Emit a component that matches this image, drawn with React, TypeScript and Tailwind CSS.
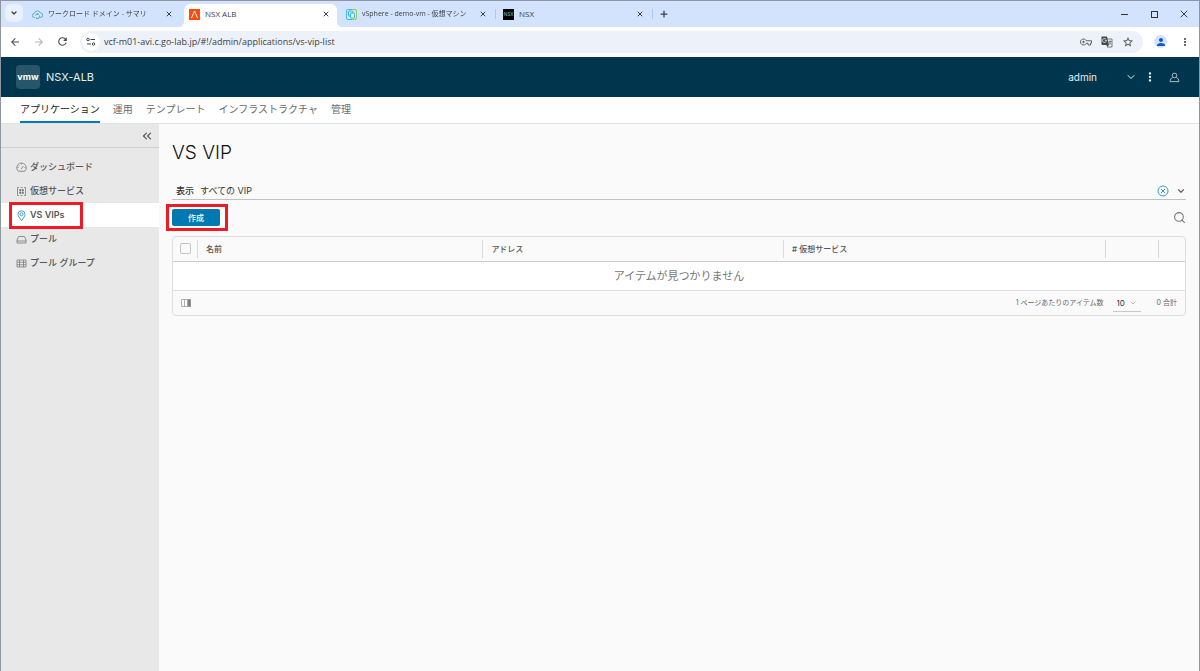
import type { ReactNode } from "react";
import { ChevronDown, ChevronsLeft, Plus, Search, X } from "lucide-react";
import { MdArrowBack, MdArrowForward, MdMoreVert, MdPerson, MdRefresh, MdStarOutline } from "react-icons/md";

interface BrowserTab {
  title: string
  icon: ReactNode
  active?: boolean
  long?: boolean
}

interface SideItem {
  label: string
  icon: ReactNode
  active?: boolean
}

function CloudIcon() {
  return (
    <svg viewBox="0 0 22 22" className="size-[11px] shrink-0" fill="none" stroke="#5aa9dd" strokeWidth="2">
      <path d="M6 17H5a4 4 0 0 1-.6-8A6.600 6.600 0 0 1 17 8a4.500 4.500 0 0 1 0 9h-1" />
      <path d="M7 13a4 4 0 0 1 7-2M15 13a4 4 0 0 1-7 4" stroke="#3dbfa6" />
      <path d="M8 19h6M11 9v3" />
    </svg>
  )
}

function AviIcon() {
  return (
    <svg viewBox="0 0 22 22" className="size-[11px] shrink-0">
      <rect width="22" height="22" fill="#ff4b0f" />
      <path d="M5 18 11 4l6 14" fill="none" stroke="#fff" strokeWidth="2" />
    </svg>
  )
}

function VsphereIcon() {
  return (
    <svg viewBox="0 0 22 22" className="size-[11px] shrink-0" fill="none" strokeWidth="2">
      <rect x="1" y="1" width="20" height="20" rx="3" fill="#c9edf8" stroke="#46b4e8" />
      <path d="M12 1h6a3 3 0 0 1 3 3v14a3 3 0 0 1-3 3h-6" stroke="#9ccb5a" />
      <rect x="5" y="4" width="9" height="10" rx="1" stroke="#36aee6" />
      <rect x="9" y="8" width="8" height="10" rx="1" fill="#e6f7fc" stroke="#36aee6" />
    </svg>
  )
}

function NsxIcon() {
  return (
    <span className="flex size-[11px] shrink-0 items-center justify-center bg-black text-[5px] leading-none font-bold text-[#5b8c7c]">
      NSX
    </span>
  )
}

function KeyIcon() {
  return (
    <svg viewBox="0 0 24 24" className="size-3" fill="none" stroke="#5f6368" strokeWidth="2">
      <path d="M12.500 9.500A6 6 0 1 0 12.500 14.500H16V18h5v-3.500h2v-5z" />
      <circle cx="7" cy="12" r="1.500" fill="#474a4d" />
    </svg>
  )
}

function TranslateIcon() {
  return (
    <svg viewBox="0 0 24 24" className="size-3" fill="none">
      <path d="M10 6h12v16H12" stroke="#5f6368" strokeWidth="1.600" />
      <path d="M1 1h11l4 17H3a2 2 0 0 1-2-2z" fill="#474a4d" />
      <path d="M11 8.500H7.500M10.800 8.500A4 4 0 1 1 9.500 6" stroke="#fff" strokeWidth="1.500" />
      <path d="M15 11h6M18 9v2M20 11c-.5 3-2 5-4 6M16 12c1 2 2.500 4 4.500 5" stroke="#5f6368" strokeWidth="1.400" />
      <path d="m11 18 1 4 4-4z" fill="#474a4d" />
    </svg>
  )
}

function SiteInfoIcon() {
  return (
    <svg viewBox="0 0 20 20" className="size-[10px]" fill="none" stroke="#3c4043" strokeWidth="2">
      <circle cx="4" cy="5" r="2.500" />
      <path d="M9 5h9M2 14h8" />
      <circle cx="15" cy="14" r="2.500" />
    </svg>
  )
}

function UserIcon() {
  return (
    <svg viewBox="0 0 24 24" className="size-[11px] text-[#b8c8cf]" fill="none" stroke="currentColor" strokeWidth="2">
      <circle cx="12" cy="7.500" r="5" />
      <path d="M8 12c-3.500 1.500-5.500 4-5.500 9h19c0-5-2-7.500-5.500-9" />
    </svg>
  )
}

function GaugeIcon() {
  return (
    <svg viewBox="0 0 22 22" className="size-[11px] text-[#777]" fill="none" stroke="currentColor" strokeWidth="1.600">
      <path d="M4.500 18.500a9.500 9.500 0 1 1 13 0z" />
      <path d="m10 14 5-6M11 3v2M3 11h2M17 11h2M5.500 6l1 1" />
    </svg>
  )
}

function ServiceIcon() {
  return (
    <svg viewBox="0 0 22 22" className="size-[11px] text-[#777]" fill="none" stroke="currentColor" strokeWidth="1.500">
      <path d="M6 3H3v16h3M16 3h3v16h-3M9 3h4M9 19h4" />
      <path d="M7 7h3v3H7zM12 7h3v3h-3zM7 12h3v3H7zM12 12h3v3h-3z" fill="currentColor" strokeWidth="1" />
    </svg>
  )
}

function PinIcon() {
  return (
    <svg viewBox="0 0 22 22" className="size-[11px] text-[#2f93c4]" fill="none" stroke="currentColor" strokeWidth="1.800">
      <path d="M11 21C7 16 4 12 4 8.500a7 7 0 0 1 14 0C18 12 15 16 11 21z" />
      <circle cx="11" cy="8.500" r="3" />
    </svg>
  )
}

function PoolIcon() {
  return (
    <svg viewBox="0 0 22 22" className="size-[11px] text-[#777]" fill="none" stroke="currentColor" strokeWidth="1.600">
      <path d="M2 18v-6l3-7h12l3 7v6zM2 14h18" />
    </svg>
  )
}

function PoolGroupIcon() {
  return (
    <svg viewBox="0 0 22 22" className="size-[11px] text-[#777]" fill="none" stroke="currentColor" strokeWidth="1.500">
      <path d="M2 4h18v14H2zM2 8.500h18M2 13.500h18M7 4v14M15 4v14" />
    </svg>
  )
}

const tabs: BrowserTab[] = [
  { title: "ワークロード ドメイン - サマリ", icon: <CloudIcon />, long: true },
  { title: "NSX ALB", icon: <AviIcon />, active: true },
  { title: "vSphere - demo-vm - 仮想マシン", icon: <VsphereIcon />, long: true },
  { title: "NSX", icon: <NsxIcon /> },
];

const sections = ["アプリケーション", "運用", "テンプレート", "インフラストラクチャ", "管理"];

const sideItems: SideItem[] = [
  { label: "ダッシュボード", icon: <GaugeIcon /> },
  { label: "仮想サービス", icon: <ServiceIcon /> },
  { label: "VS VIPs", icon: <PinIcon />, active: true },
  { label: "プール", icon: <PoolIcon /> },
  { label: "プール グループ", icon: <PoolGroupIcon /> },
];

function TabStrip() {
  return (
    <div className="flex h-[26px] bg-[#d3e3fd] pl-1 text-[#3c4043]">
      <button aria-label="タブを検索" className="mt-[3px] mr-1 flex size-[18px] items-center justify-center rounded-md bg-[#e9f1fe]">
        <ChevronDown className="size-2" strokeWidth={4} />
      </button>
      <div role="tablist" className="flex">
        {tabs.map((tab) => (
          <div
            key={tab.title}
            className={tab.active ? "relative mt-[3px] mr-1 flex w-[153px] items-center rounded-t-md bg-white pb-[3px] pl-[5px]" : "flex w-[157px] items-center pl-[5px]"}
          >
            {tab.active && (
              <svg viewBox="0 0 165 6" className="absolute bottom-0 -left-[6px] h-[6px] w-[165px]" fill="#fff">
                <path d="M0 6h6V0c0 4-2 6-6 6zM165 6h-6V0c0 4 2 6 6 6z" />
              </svg>
            )}
            {tab.icon}
            <button
              role="tab"
              aria-selected={!!tab.active}
              className={tab.long ? "ml-[5px] w-28 mask-r-from-90% text-left text-[7px] leading-3 whitespace-nowrap" : "ml-[5px] w-28 text-left text-[8px] leading-3 whitespace-nowrap"}
            >
              {tab.title}
            </button>
            <button aria-label="タブを閉じる" className="ml-[5px]">
              <X className="size-2" strokeWidth={3} />
            </button>
            {!tab.active && tab.title !== tabs[0].title && <span className="ml-2 h-[10px] w-px bg-[#a8c7fa]" />}
          </div>
        ))}
      </div>
      <button aria-label="新しいタブ" className="ml-1">
        <Plus className="size-[10px]" strokeWidth={3} />
      </button>
      <div className="ml-auto flex items-center gap-[18px] pr-[9px]">
        <button aria-label="最小化" className="flex size-3 items-center justify-center">
          <span className="h-px w-[7px] bg-[#333]" />
        </button>
        <button aria-label="最大化" className="flex size-3 items-center justify-center">
          <span className="size-[7px] border border-[#333]" />
        </button>
        <button aria-label="閉じる">
          <X className="size-3" strokeWidth={2} />
        </button>
      </div>
    </div>
  )
}

function AddressBar() {
  return (
    <div className="flex h-[30px] items-center bg-white pr-2 pb-px pl-2 text-[#474a4d]">
      <button aria-label="戻る"><MdArrowBack className="size-3" /></button>
      <button aria-label="進む" className="ml-3 text-[#b0b3b7]"><MdArrowForward className="size-3" /></button>
      <button aria-label="再読み込み" className="ml-[11px]"><MdRefresh className="size-[13px]" /></button>
      <div className="ml-[11px] flex h-[22px] min-w-0 grow items-center rounded-full bg-[#edf1fa] pr-[9px] pl-[2px]">
        <button aria-label="サイト情報" className="flex size-[18px] items-center justify-center rounded-full bg-white">
          <SiteInfoIcon />
        </button>
        <input
          aria-label="アドレス"
          className="ml-1 min-w-0 grow bg-transparent text-[9px] leading-4 text-[#3c4043] outline-none"
          defaultValue="vcf-m01-avi.c.go-lab.jp/#!/admin/applications/vs-vip-list"
        />
        <div className="flex items-center gap-[9px]">
          <button aria-label="パスワード"><KeyIcon /></button>
          <button aria-label="翻訳"><TranslateIcon /></button>
          <button aria-label="ブックマーク"><MdStarOutline className="size-3" /></button>
        </div>
      </div>
      <button aria-label="プロフィール" className="ml-[11px] flex size-[13px] items-center justify-center rounded-full bg-[#d3e3fd] text-[#0b57d0]">
        <MdPerson className="size-3" />
      </button>
      <button aria-label="メニュー" className="ml-3"><MdMoreVert className="size-3" /></button>
    </div>
  )
}

function AppHeader() {
  return (
    <header className="flex h-10 items-center bg-[#00364d] pr-[19px] pl-[15px] font-['Inter','Noto_Sans_CJK_JP',sans-serif] text-[#e8eef1]">
      <span className="flex size-6 items-center justify-center rounded-sm bg-[#27566b] text-[9px] font-bold text-white">vmw</span>
      <span className="ml-[6px] text-[11px]">NSX-ALB</span>
      <button className="ml-auto flex items-center gap-7 text-[10px]">
        admin
        <ChevronDown className="size-3" />
      </button>
      <button aria-label="その他" className="ml-[6px]"><MdMoreVert className="size-[14px]" /></button>
      <button aria-label="ユーザー" className="ml-3"><UserIcon /></button>
    </header>
  )
}

function SectionNav() {
  return (
    <nav className="flex h-[27px] gap-[13px] border-b border-[#dde5e7] bg-white pl-[19px] text-[10px] text-[#6a6a6a]">
      {sections.map((name, i) => (
        <a key={name} href="#" className={i === 0 ? "border-b-2 border-[#0079b8] leading-6 text-[#222]" : "leading-6"}>
          {name}
        </a>
      ))}
    </nav>
  )
}

function Sidebar() {
  return (
    <aside className="w-[158px] shrink-0 bg-[#e8e8e8] text-[#565656]">
      <div className="flex h-6 items-center justify-end border-b border-[#d0d0d0] pr-[5px]">
        <button aria-label="折りたたむ"><ChevronsLeft className="size-[14px]" /></button>
      </div>
      <ul className="mt-[7px]">
        {sideItems.map((item) => (
          <li key={item.label} className={item.active ? "relative bg-white font-semibold" : "font-medium"}>
            <a href="#" className="flex h-6 items-center gap-[3px] pl-[15px] text-[9px]">
              {item.icon}
              {item.label}
            </a>
            {item.active && <span className="pointer-events-none absolute -top-px left-2 h-[27px] w-[74px] border-3 border-[#ed1c24]" />}
          </li>
        ))}
      </ul>
    </aside>
  )
}

function Heading({ label }: { label: string }) {
  return <span className="block h-[18px] border-l border-[#dadada] pl-2 leading-[18px]">{label}</span>
}

function VipTable() {
  return (
    <div className="mt-[10px] rounded-sm border border-[#dedede] bg-[#fafafa] text-[#565656]">
      <table className="w-full table-fixed border-collapse text-left text-[8px]">
        <thead>
          <tr className="h-6 border-b border-[#ccc]">
            <th className="w-6 p-0">
              <input type="checkbox" aria-label="すべて選択" className="ml-[7px] block size-[11px] appearance-none rounded-xs border border-[#c4c4c4] bg-[#fafafa]" />
            </th>
            <th className="w-[28.2%] p-0 font-medium"><Heading label="名前" /></th>
            <th className="w-[29.7%] p-0 font-medium"><Heading label="アドレス" /></th>
            <th className="p-0 font-medium"><Heading label="# 仮想サービス" /></th>
            <th className="w-[53px] p-0"><Heading label="" /></th>
            <th className="w-[27px] p-0"><Heading label="" /></th>
          </tr>
        </thead>
        <tbody>
          <tr className="h-[29px] border-b border-[#dedede] bg-white">
            <td colSpan={6} className="p-0 text-center text-[11px] leading-4 text-[#777]">アイテムが見つかりません</td>
          </tr>
        </tbody>
      </table>
      <div className="flex h-6 items-center pr-2 pl-2 text-[7px] text-[#666]">
        <button aria-label="列の管理">
          <svg viewBox="0 0 20 16" className="h-2 w-[10px]" fill="none" stroke="#999" strokeWidth="1.500">
            <path d="M1 1h18v14H1zM7 1v14M13 1v14" />
            <path d="M14 1h5v14h-5z" fill="#777" />
          </svg>
        </button>
        <label htmlFor="page-size" className="mt-px ml-auto">1 ページあたりのアイテム数</label>
        <div className="ml-[9px] flex w-7 items-center border-b border-[#c8c8c8] pt-[2px] pr-1">
          <select id="page-size" className="w-5 appearance-none bg-transparent pl-1 text-[8px] leading-4 text-[#333] outline-none">
            <option>10</option>
          </select>
          <ChevronDown className="size-2 shrink-0 text-[#999]" />
        </div>
        <span className="mt-px ml-4">0 合計</span>
      </div>
    </div>
  )
}

function App() {
  return (
    <div className="flex min-h-screen flex-col border-x border-t border-[#8f95a3] bg-[#fafafa] font-['Open_Sans','Noto_Sans_CJK_JP',sans-serif]">
      <TabStrip />
      <AddressBar />
      <AppHeader />
      <SectionNav />
      <div className="flex grow font-['Inter','Noto_Sans_CJK_JP',sans-serif]">
        <Sidebar />
        <main className="min-w-0 grow px-[13px] pt-[17px]">
          <h1 className="text-[19px] leading-6 font-light text-[#111]">VS VIP</h1>
          <div className="mt-[18px] flex h-[17px] items-center border-b border-[#c0c0c0] pl-1 text-[9px] text-[#333]">
            <label htmlFor="filter" className="font-medium">表示</label>
            <input id="filter" className="ml-[6px] min-w-0 grow bg-transparent leading-4 outline-none" defaultValue="すべての VIP" />
            <button aria-label="クリア">
              <svg viewBox="0 0 24 24" className="size-3" fill="none" stroke="#3d9bc9" strokeWidth="2">
                <circle cx="12" cy="12" r="10" />
                <path d="m8 8 8 8M16 8l-8 8" />
              </svg>
            </button>
            <button aria-label="開く" className="ml-[7px]"><ChevronDown className="size-[10px] text-[#666]" strokeWidth={3} /></button>
          </div>
          <div className="mt-[9px] flex items-center justify-between">
            <div className="relative">
              <button className="block h-[17px] w-12 rounded-xs bg-[#0079b0] text-[8px] font-medium text-white">作成</button>
              <span className="pointer-events-none absolute -inset-y-[5px] -right-2 -left-[6px] border-3 border-[#ed1c24]" />
            </div>
            <button aria-label="検索"><Search className="size-[13px] text-[#777]" strokeWidth={2} /></button>
          </div>
          <VipTable />
        </main>
      </div>
    </div>
  )
}

export default App
